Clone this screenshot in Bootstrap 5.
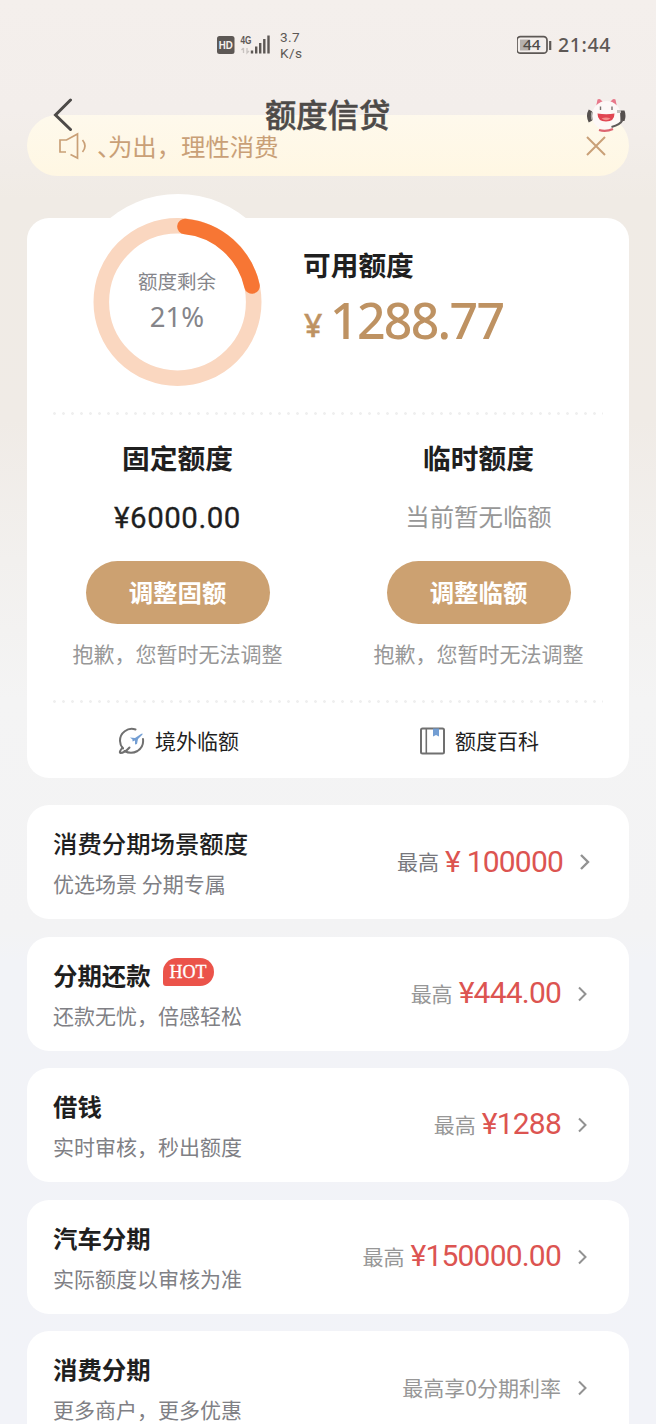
<!DOCTYPE html>
<html lang="zh-CN">
<head>
<meta charset="utf-8">
<meta name="viewport" content="width=device-width, initial-scale=1">
<title>额度信贷</title>
<link href="https://cdn.jsdelivr.net/npm/bootstrap@5.3.0/dist/css/bootstrap.min.css" rel="stylesheet">
<style>
body{height:1424px;overflow:hidden;font-family:"Noto Sans CJK SC",sans-serif;color:#1f1f1f;
background:linear-gradient(180deg,#f4efec 0,#f3eeeb 110px,#f0ebe5 200px,#f0ebe6 420px,#f2f0ee 560px,#f4f4f4 700px,#f3f3f4 930px,#f2f3f7 960px,#f2f3f8 1424px)}
svg{display:block;flex:none}
.statusbar{height:80px;padding:28px 45px 0 217px;color:#5d5855}
.speed{font:400 13.6px/16px Roboto,sans-serif;letter-spacing:.4px;margin-left:9px;padding-top:1px}
.clock{font:500 19.5px/34px "Noto Sans",sans-serif;letter-spacing:.6px}
.topbar{height:70px;z-index:2;padding:0 29px 0 52px}
.topbar h1{font-size:31.3px;line-height:68px;font-weight:500;-webkit-text-stroke:.5px #4d4a48;color:#4d4a48;white-space:nowrap;left:265px;top:0}
.notice{height:61px;margin:-35px 27px 0 27px;border-radius:31px;background:linear-gradient(#fef9ec,#fff7e3);color:#c9a077;padding:0 22px 0 31px}
.marquee{font-size:24.4px;line-height:59px;margin-left:9px}
.marquee span{letter-spacing:-13.500px}
.quota{margin:42px 27px 0 27px;height:560px;border-radius:22px;background:#fff}
.halo{width:216px;height:216px;left:43px;top:-24px}
.summary{height:194px;padding-left:276px}
.ringtext{left:60px;width:180px;top:48px;color:#85858a}
.ringtext div:first-child{font-size:19.5px;line-height:29px}
.ringtext div:last-child{font:27.5px/34px "Noto Sans",sans-serif;margin-top:5px}
.avail{font-size:27.7px;line-height:36px;font-weight:700;padding-top:28px}
.money{color:#be9262;line-height:60px;margin-top:8px;margin-left:1px}
.money small{font:500 32px/60px "Noto Sans",sans-serif;-webkit-text-stroke:.5px #be9262;width:26px;padding-top:5px}
.money b{font:500 50px/60px "Noto Sans",sans-serif;letter-spacing:-1.7px}
.dots{height:3px;margin:0 26px;background:radial-gradient(circle at 1.5px 1.5px,#efefef 1.1px,transparent 1.6px) 0 0/9px 3px repeat-x}
.dots.lower{margin-top:-1px;margin-bottom:1px}
.half{height:286px;width:50%;padding-top:22px}
.half h2{font-size:27.7px;line-height:40px;font-weight:700;margin:0}
.fixedsum{font:400 29.5px/40px Roboto,sans-serif;-webkit-text-stroke:.3px #1f1f1f;letter-spacing:.5px;margin-top:21px;height:40px}
.nosum{font-size:24.4px;line-height:40px;margin-top:19px;height:42px;color:#979797}
.pillbtn{width:184px;height:63px;margin-top:23px;border-radius:32px;background:#cca171;color:#fff;font-size:24.4px;line-height:59px;font-weight:700;padding:0 0 2px;border:0}
.sorry{font-size:21px;line-height:30px;margin-top:14px;color:#979797}
.tool{width:50%;height:75px;padding:0 0 1px 2px;font-size:21px;gap:10px}
.offers{margin:27px 27px 0;gap:17.5px}
.offer{height:114px;border-radius:22px;background:#fff;padding:0 39px 0 26px}
.offer h3{font-size:24.4px;line-height:34px;font-weight:700;margin:0}
.offer.first h3{font-weight:500}
.offer p{font-size:21px;line-height:30px;margin:8px 0 0;color:#808085}
.hot{width:51px;height:28px;background:#eb534a;border-radius:14px 14px 14px 3px;color:#fff;font:18px/28px "Liberation Serif",serif;margin:0 0 -6px 12px;-webkit-text-stroke:.3px #fff}
.upto{font-size:21px;line-height:36px;color:#979797;margin-top:-2px}
.first .upto{color:#77777c}
.sum{font:400 30px/36px Roboto,sans-serif;color:#dc5451;margin:-2px 0 0 6px;letter-spacing:-.8px}
.first .sum{margin-top:0}
.arrow{margin-left:16px}
.offer.first{padding-right:37px}
</style>
<script src="https://cdn.jsdelivr.net/npm/bootstrap@5.3.0/dist/js/bootstrap.bundle.min.js"></script>
</head>
<body>
<div class="statusbar d-flex align-items-start justify-content-between">
  <div class="d-flex">
    <svg width="54" height="34" viewBox="0 0 54 34">
      <rect x="0" y="8" width="17.500" height="18" rx="2.500" fill="#5d5855"/>
      <text x="8.700" y="21" text-anchor="middle" font-family="Liberation Sans" font-weight="700" font-size="11" textLength="14" lengthAdjust="spacingAndGlyphs" fill="#f4efec">HD</text>
      <text x="23.500" y="16" font-family="Liberation Sans" font-weight="700" font-size="11" textLength="11" lengthAdjust="spacingAndGlyphs" fill="#5d5855">4G</text>
      <path d="M26.500 20v5m-2-3 2-2M30 20v5l2-2" stroke="#c8c3c0" stroke-width="1.300" fill="none"/>
      <path d="M35 22.500v3M39.200 18.500v7M43.200 15v10.500M47.300 11v14.500M51.500 7.500v18" stroke="#5d5855" stroke-width="2.400"/>
    </svg>
    <div class="speed"><div>3.7</div><div>K/s</div></div>
  </div>
  <div class="d-flex">
    <svg width="41" height="34" viewBox="0 0 41 34">
      <rect x="0" y="8.700" width="30" height="16.500" rx="3.500" fill="none" stroke="#5d5855" stroke-width="1.700"/>
      <rect x="3" y="11.500" width="10" height="11" fill="#b5b0ad"/>
      <path d="M33.200 13v9" stroke="#5d5855" stroke-width="2.200"/>
      <text x="6" y="22" font-family="Noto Sans" font-weight="500" font-size="14" textLength="17.500" lengthAdjust="spacingAndGlyphs" fill="#4d4a48">44</text>
    </svg>
    <div class="clock">21:44</div>
  </div>
</div>
<header class="topbar position-relative d-flex justify-content-between align-items-center">
  <svg width="22" height="34" viewBox="0 0 22 34"><path d="M18.500 2 3.500 17l15 14.500" fill="none" stroke="#4d4a48" stroke-width="3" stroke-linecap="round"/></svg>
  <h1 class="position-absolute m-0">额度信贷</h1>
  <svg width="42" height="38" viewBox="0 0 42 38">
    <path d="M11 11 12.500 3.500q3-2 6 4zM32 11 30.500 3.500q-3-2-6 4z" fill="#e8788a"/>
    <circle cx="21.500" cy="19.500" r="14.500" fill="#fdf8f7"/>
    <path d="M14 34q7 2 14-1" stroke="#dc6571" stroke-width="2.300" fill="none"/>
    <path d="M12.500 17.500q9 1.500 17 0 0 8-8.500 8t-8.500-8z" fill="#e04552"/><path d="M16.500 22.500q4.500-2 9 0-4.500 3.500-9 0z" fill="#f58e8b"/>
    <path d="M15.500 10.500v3.500M27 10.500v3.500" stroke="#77716f" stroke-width="1.400"/>
    <path d="M5.500 14.500q-3 5 0 11" fill="none" stroke="#55504e" stroke-width="4"/>
    <path d="M7.300 16q-1.500 4 0 8" fill="none" stroke="#a9a4a3" stroke-width="1.500"/>
    <path d="M35 14.500h4.500q2 5.500 0 10.500h-4z" fill="#55504e"/>
    <path d="M37.500 24q-2 4.500-11 7" fill="none" stroke="#5e5958" stroke-width="2"/>
    <path d="M32 15.500h4" stroke="#c3bebc" stroke-width="3"/>
  </svg>
</header>
<div class="notice d-flex align-items-center">
  <svg width="30" height="28" viewBox="0 0 30 28"><path d="M8 20H2V8h6.500L19.500 2v24L12.500 22.500M24.500 8q5 6 0 12" fill="none" stroke="#c9a077" stroke-width="1.700"/></svg>
  <div class="marquee text-nowrap"><span>、</span>为出，理性消费</div>
  <svg class="ms-auto" width="22" height="22" viewBox="0 0 22 22"><path d="m2 2 18 18M20 2 2 20" stroke="#c9a077" stroke-width="2"/></svg>
</div>
<main>
  <section class="quota position-relative">
    <svg class="halo position-absolute" viewBox="0 0 216 216">
      <circle cx="108" cy="108" r="108" fill="#fff"/>
      <circle cx="107.500" cy="108" r="76.200" fill="none" stroke="#fad7c0" stroke-width="15.600"/>
      <path d="M115 32.600A76.200 76.200 0 0 1 182 92" fill="none" stroke="#f77634" stroke-width="15.600" stroke-linecap="round"/>
    </svg>
    <div class="ringtext position-absolute text-center"><div>额度剩余</div><div>21%</div></div>
    <div class="summary">
      <div class="avail">可用额度</div>
      <div class="money d-flex"><small>¥</small><b>1288.77</b></div>
    </div>
    <div class="dots"></div>
    <div class="d-flex text-center">
      <div class="half d-flex flex-column align-items-center">
        <h2>固定额度</h2><div class="fixedsum">¥6000.00</div>
        <button class="pillbtn btn">调整固额</button><div class="sorry">抱歉，您暂时无法调整</div>
      </div>
      <div class="half d-flex flex-column align-items-center">
        <h2>临时额度</h2><div class="nosum">当前暂无临额</div>
        <button class="pillbtn btn">调整临额</button><div class="sorry">抱歉，您暂时无法调整</div>
      </div>
    </div>
    <div class="dots lower"></div>
    <div class="d-flex">
      <div class="tool d-flex align-items-center justify-content-center">
        <svg width="27" height="28" viewBox="0 0 27 28"><g fill="none" stroke="#707070" stroke-width="2" stroke-linecap="round"><path d="M17.500 2.500A11.800 11.800 0 0 0 2 14q0 4 3 7.500M25 12q1 8-5.500 12-6.500 3.500-13 0"/><path d="M4.500 20.500q-4 5-2 5.500 4 0 9-5.500"/></g><path d="m12 10.500 5 .5 6-4q2-1 1.500.5L20 12l-1 5-2 .5v-4l-2.500 1v-2z" fill="#739ed3"/></svg>
        <span>境外临额</span>
      </div>
      <div class="tool d-flex align-items-center justify-content-center">
        <svg width="25" height="28" viewBox="0 0 25 28"><rect x="1" y="1.500" width="23" height="25" rx="1.500" fill="none" stroke="#707070" stroke-width="2"/><path d="M6.300 1.500v25" stroke="#707070" stroke-width="1.600"/><path d="M13 1.500h6v8l-3-1.500-3 1.500z" fill="#739ed3"/></svg>
        <span>额度百科</span>
      </div>
    </div>
  </section>
  <section class="offers d-flex flex-column">
    <div class="offer first d-flex align-items-center">
      <div><h3>消费分期场景额度</h3><p>优选场景 分期专属</p></div>
      <span class="upto ms-auto">最高</span><span class="sum">¥ 100000</span>
      <svg class="arrow" width="13" height="18" viewBox="0 0 13 18"><path d="m2 2 7 7-7 7" fill="none" stroke="#929292" stroke-width="2.400"/></svg>
    </div>
    <div class="offer d-flex align-items-center">
      <div><div class="d-flex"><h3>分期还款</h3><span class="hot text-center">HOT</span></div><p>还款无忧，倍感轻松</p></div>
      <span class="upto ms-auto">最高</span><span class="sum">¥444.00</span>
      <svg class="arrow" width="13" height="18" viewBox="0 0 13 18"><path d="m2 2.500 6.500 6.500L2 15.500" fill="none" stroke="#929292" stroke-width="2"/></svg>
    </div>
    <div class="offer d-flex align-items-center">
      <div><h3>借钱</h3><p>实时审核，秒出额度</p></div>
      <span class="upto ms-auto">最高</span><span class="sum">¥1288</span>
      <svg class="arrow" width="13" height="18" viewBox="0 0 13 18"><path d="m2 2.500 6.500 6.500L2 15.500" fill="none" stroke="#929292" stroke-width="2"/></svg>
    </div>
    <div class="offer d-flex align-items-center">
      <div><h3>汽车分期</h3><p>实际额度以审核为准</p></div>
      <span class="upto ms-auto">最高</span><span class="sum">¥150000.00</span>
      <svg class="arrow" width="13" height="18" viewBox="0 0 13 18"><path d="m2 2.500 6.500 6.500L2 15.500" fill="none" stroke="#929292" stroke-width="2"/></svg>
    </div>
    <div class="offer d-flex align-items-center">
      <div><h3>消费分期</h3><p>更多商户，更多优惠</p></div>
      <span class="upto ms-auto">最高享0分期利率</span>
      <svg class="arrow" width="13" height="18" viewBox="0 0 13 18"><path d="m2 2.500 6.500 6.500L2 15.500" fill="none" stroke="#929292" stroke-width="2"/></svg>
    </div>
  </section>
</main>
</body>
</html>
